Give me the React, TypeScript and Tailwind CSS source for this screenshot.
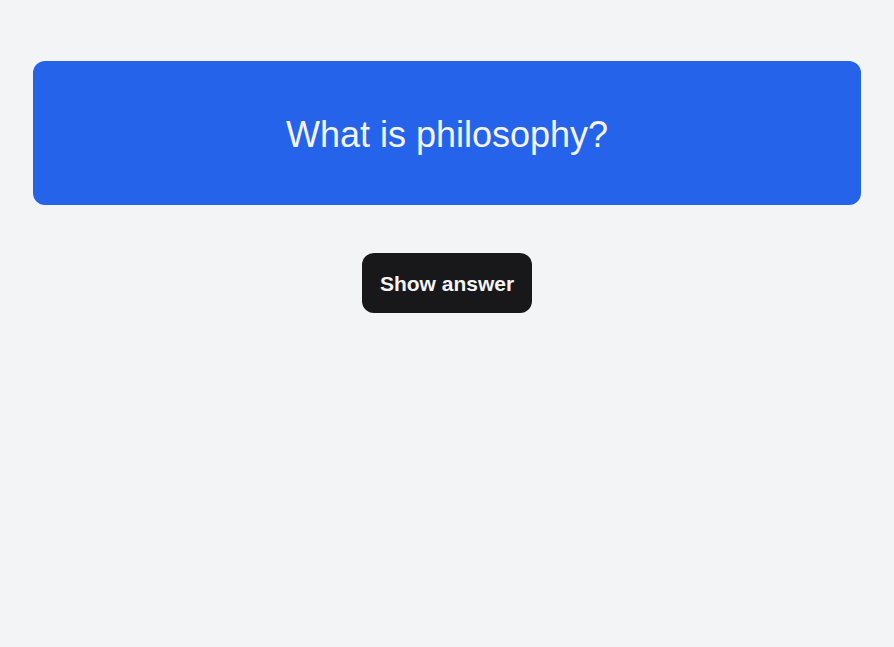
export default function App() {
  return (
    <div
      className="min-h-screen bg-[#f3f4f6] px-[33px] pt-[61px]"
      style={{ fontFamily: '"Liberation Sans", Arial, sans-serif' }}
    >
      <div className="rounded-xl bg-[#2563eb] pt-[54px] pb-[50px] text-center text-4xl text-[#f3f4f6]">
        What is philosophy?
      </div>
      <div className="mt-12 flex justify-center">
        <button className="rounded-xl bg-[#18181b] px-[18px] pt-[17px] pb-[15px] text-[21px] leading-7 font-bold text-[#f3f4f6]">
          Show answer
        </button>
      </div>
    </div>
  );
}
